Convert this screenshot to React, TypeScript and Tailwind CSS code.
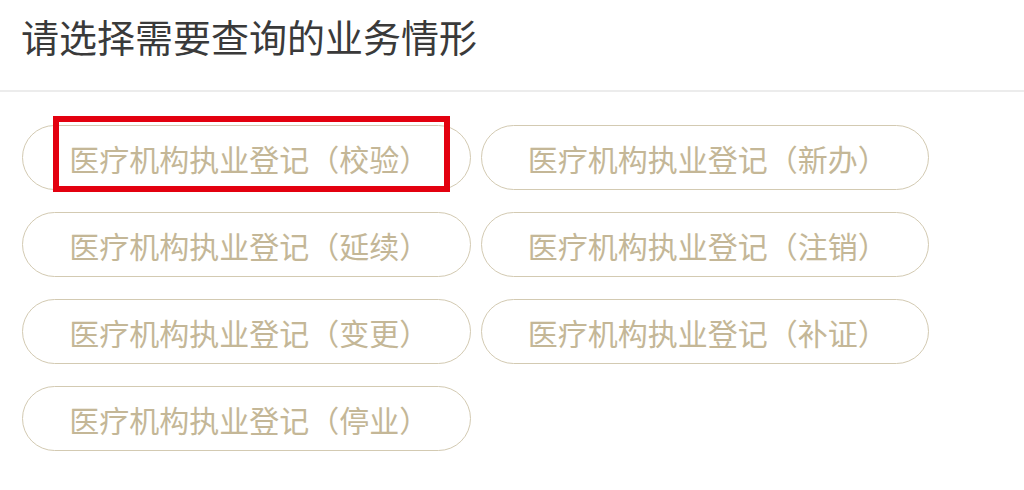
const ITEMS = ["校验", "新办", "延续", "注销", "变更", "补证", "停业"];

function Option({ label, marked }: { label: string; marked?: boolean }) {
  return (
    <div className="relative">
      <button
        type="button"
        className="flex h-[65px] w-full items-center justify-center rounded-full border-[1.5px] border-[#d3cab2] bg-white pl-[6px] text-[30px] leading-none text-[#c4b797]"
      >
        医疗机构执业登记（{label}）
      </button>
      {marked && (
        <span className="pointer-events-none absolute left-[31px] top-[-9px] h-[76px] w-[397px] border-[6px] border-[#e3000f]" />
      )}
    </div>
  );
}

export default function App() {
  return (
    <main
      className="h-[490px] w-[1024px] overflow-hidden bg-white"
      style={{ fontFamily: '"Noto Sans CJK SC", "Microsoft YaHei", sans-serif' }}
    >
      <header className="flex h-[92px] items-start border-b-2 border-[#ececec] pl-[21px] pt-[12px]">
        <h1 className="text-[38px] leading-[48px] font-normal text-[#3a3a3a]">请选择需要查询的业务情形</h1>
      </header>

      <section className="grid w-[929px] grid-cols-2 gap-x-[10px] gap-y-[22px] pl-[22px] pt-[33px]">
        {ITEMS.map((item, i) => (
          <Option key={item} label={item} marked={i === 0} />
        ))}
      </section>
    </main>
  );
}
